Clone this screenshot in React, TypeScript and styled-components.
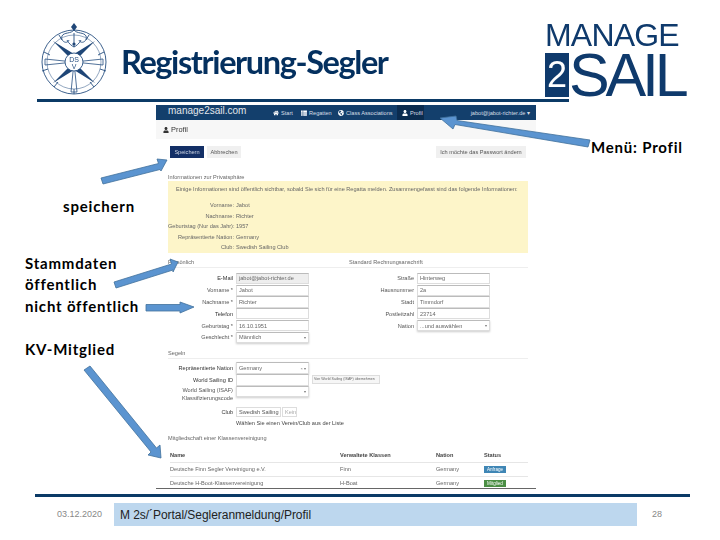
import styled, { createGlobalStyle } from "styled-components"
import { FaHome, FaThList, FaGlobeAmericas, FaUser } from "react-icons/fa"

const GlobalStyle = createGlobalStyle`
  html, body {
    margin: 0;
    padding: 0;
    background: #fff;
  }
  * { box-sizing: border-box; }
`

const Slide = styled.div`
  position: relative;
  width: 720px;
  height: 540px;
  overflow: hidden;
  background: #fff;
  font-family: "Liberation Sans", Arial, sans-serif;
`

const Header = styled.header`
  display: flex;
  align-items: flex-start;
  height: 102px;
  padding-left: 37px;
`

const TitleBar = styled.div`
  display: flex;
  align-items: flex-start;
  width: 532px;
  height: 102px;
  border-bottom: 3px solid #0b3a66;
`

const Title = styled.h1`
  margin: 43px 0 0 10px;
  font-family: Lato, "Open Sans", sans-serif;
  font-size: 32.5px;
  line-height: 38px;
  font-weight: 700;
  letter-spacing: -1.4px;
  color: #04305f;
  white-space: nowrap;
  filter: blur(0.3px);
`

const Brand = styled.div`
  margin: 18px 0 0 -24px;
  color: #0f3a6c;
  display: flex;
  flex-direction: column;
  font-family: "Liberation Sans", Arial, sans-serif;
  filter: blur(0.3px);
`

const BrandTop = styled.div`
  font-size: 32px;
  line-height: 35px;
  letter-spacing: -0.8px;
`

const BrandBottom = styled.div`
  display: flex;
  align-items: center;
  height: 44px;
`

const BrandBox = styled.span`
  width: 24px;
  height: 44px;
  display: flex;
  align-items: center;
  justify-content: center;
  background: #0f3a6c;
  color: #fff;
  font-size: 36px;
`

const BrandSail = styled.span`
  font-size: 61px;
  line-height: 44px;
  letter-spacing: -4.2px;
`

const Main = styled.main`
  display: flex;
  height: 392px;
`

const LeftNotes = styled.aside`
  width: 156px;
  padding: 94px 0 0 25px;
`

const Note = styled.p<{ $top?: number; $indent?: number }>`
  margin: ${p => p.$top ?? 0}px 0 0 ${p => p.$indent ?? 0}px;
  font-family: Lato, "Open Sans", sans-serif;
  font-size: 15px;
  line-height: 21.5px;
  font-weight: 700;
  letter-spacing: 0.8px;
  color: #000;
  white-space: nowrap;
`

const RightNotes = styled.aside`
  flex: 1;
  padding: 35px 0 0 55px;
`

const Panel = styled.section`
  width: 380px;
  height: 384px;
  margin-top: 3px;
  display: flex;
  flex-direction: column;
  color: #666;
  font-size: 5.6px;
  filter: blur(0.5px);
  border-bottom: 1px solid #666;
  > * { flex: none; }
`

const Nav = styled.nav`
  height: 15px;
  background: #133f6c;
  color: #d8dfe6;
  display: flex;
  align-items: center;
  padding-left: 12px;
`

const NavBrand = styled.span`
  width: 100px;
  font-size: 10px;
  line-height: 11px;
  margin-top: -4px;
  color: #e2e6ea;
`

const NavLink = styled.span<{ $active?: boolean; $width: number }>`
  display: flex;
  align-items: center;
  gap: 2px;
  width: ${p => p.$width}px;
  height: 15px;
  padding-left: 5px;
  background: ${p => (p.$active ? "#0b2c4f" : "transparent")};
  white-space: nowrap;
  svg { flex: none; color: #fff; }
`

const NavUser = styled.span`
  margin-left: auto;
  padding-right: 6px;
`

const SubHeader = styled.div`
  height: 19px;
  background: #f7f7f7;
  color: #333;
  font-size: 7.4px;
  display: flex;
  align-items: center;
  gap: 2px;
  padding-left: 7px;
`

const Actions = styled.div`
  display: flex;
  gap: 3px;
  margin: 7px 10px 0 14px;
  height: 12px;
`

const ActionButton = styled.span<{ $primary?: boolean; $wide?: boolean }>`
  width: ${p => (p.$wide ? 90 : 34)}px;
  margin-left: ${p => (p.$wide ? "auto" : 0)};
  display: flex;
  align-items: center;
  justify-content: center;
  background: ${p => (p.$primary ? "#132f66" : "#f0f0f0")};
  color: ${p => (p.$primary ? "#cfd6e4" : "#555")};
  white-space: nowrap;
`

const SmallHead = styled.div<{ $top: number }>`
  margin: ${p => p.$top}px 0 0 12px;
  height: 7px;
  line-height: 7px;
  white-space: nowrap;
`

const InfoBox = styled.div`
  width: 360px;
  height: 72px;
  margin: 0 0 0 12px;
  padding-top: 5px;
  background: #fdf5c9;
`

const InfoIntro = styled.div`
  padding-left: 8px;
  height: 14.5px;
  white-space: nowrap;
`

const InfoRow = styled.div`
  display: grid;
  grid-template-columns: 66px 1fr;
  gap: 2px;
  height: 10.5px;
  line-height: 10.5px;
  white-space: nowrap;
  span:first-child { text-align: right; }
`

const Columns = styled.div<{ $top: number }>`
  display: flex;
  margin: ${p => p.$top}px 0 0 12px;
  width: 360px;
`

const Column = styled.div<{ $width: number }>`
  width: ${p => p.$width}px;
`

const SectionHead = styled.div<{ $gap: number }>`
  height: 9px;
  line-height: 7px;
  border-bottom: 1px solid #eee;
  margin-bottom: ${p => p.$gap}px;
  white-space: nowrap;
`

const FormRow = styled.div<{ $tall?: boolean }>`
  display: grid;
  grid-template-columns: 65px 73px auto;
  gap: 3px;
  align-items: ${p => (p.$tall ? "start" : "center")};
  height: ${p => (p.$tall ? 20 : 11.8)}px;
  white-space: nowrap;
`

const FormLabel = styled.span<{ $strong?: boolean }>`
  text-align: right;
  color: ${p => (p.$strong ? "#333" : "#555")};
  line-height: 8px;
  white-space: normal;
`

const Field = styled.span<{ $muted?: boolean; $select?: boolean }>`
  height: 11.4px;
  display: flex;
  align-items: center;
  justify-content: space-between;
  padding: 0 2px;
  border: 1px solid #ddd;
  border-top-color: #bbb;
  background: ${p => (p.$muted ? "#eeeeee" : "#fff")};
  box-shadow: ${p => (p.$select ? "0 1px 2px #ccc" : "none")};
  white-space: nowrap;
  overflow: hidden;
`

const Caret = styled.i`
  font-style: normal;
  color: #777;
  font-size: 4px;
`

const SmallButton = styled.span`
  width: 68px;
  height: 9px;
  border: 1px solid #ddd;
  background: #f6f6f6;
  font-size: 3.6px;
  line-height: 7px;
  white-space: nowrap;
  padding-left: 1px;
`

const ClubFields = styled.div`
  display: flex;
  gap: 1px;
`

const ClubField = styled.span<{ $width: number; $muted?: boolean }>`
  width: ${p => p.$width}px;
  height: 10px;
  display: flex;
  align-items: center;
  padding: 0 2px;
  border: 1px solid #ddd;
  color: ${p => (p.$muted ? "#aaa" : "#555")};
  white-space: nowrap;
`

const ClubHint = styled.div`
  margin: 1px 0 0 68px;
  height: 8px;
  line-height: 8px;
  color: #444;
  white-space: nowrap;
`

const Table = styled.div`
  margin: 7px 0 0 14px;
  width: 358px;
`

const TableRow = styled.div<{ $head?: boolean }>`
  display: grid;
  grid-template-columns: 170px 96px 48px 1fr;
  align-items: center;
  height: 14px;
  border-bottom: 1px solid #e6e6e6;
  color: ${p => (p.$head ? "#444" : "#666")};
  font-weight: ${p => (p.$head ? 700 : 400)};
  white-space: nowrap;
  &:last-child {
    height: 13px;
    border-bottom: none;
  }
`

const Badge = styled.span<{ $color: string }>`
  display: inline-block;
  width: 22px;
  height: 7px;
  line-height: 7px;
  text-align: center;
  font-size: 4.6px;
  background: ${p => p.$color};
  color: #fff;
`

const Footer = styled.footer`
  margin: 0 30px 0 35px;
  height: 31px;
  border-top: 3px solid #0b3a66;
  padding-top: 6px;
  display: flex;
  align-items: stretch;
  font-size: 9px;
  color: #888;
`

const FooterDate = styled.span`
  width: 79px;
  padding-left: 22px;
  display: flex;
  align-items: center;
  white-space: nowrap;
`

const FooterBar = styled.div`
  width: 523px;
  height: 23px;
  background: #bdd7ee;
  color: #222;
  font-size: 12px;
  display: flex;
  align-items: center;
  padding-left: 6px;
  letter-spacing: -0.05px;
  white-space: nowrap;
`

const FooterPage = styled.span`
  margin-left: 15px;
  display: flex;
  align-items: center;
`

const ArrowLayer = styled.svg`
  position: absolute;
  left: 0;
  top: 0;
  pointer-events: none;
`

const LogoMark = styled.svg`
  flex: none;
  margin-top: 21px;
  filter: blur(0.25px);
`

const DsvLogo = () => (
  <LogoMark width="74" height="74" viewBox="0 0 74 74">
    <g fill="none" stroke="#274f80" strokeWidth="0.9">
      <circle cx="37" cy="41" r="32" />
      <circle cx="37" cy="41" r="27" strokeWidth="0.5" />
      <path d="M37 9c-3 4-10 2-12 6-2 5 5 9 7 4M37 9c3 4 10 2 12 6 2 5-5 9-7 4M37 12v14M30 19c2 4 5 6 7 7 2-1 5-3 7-7" />
      <path d="M7 31l6 3M67 31l-6 3M5 50l6-2M69 50l-6-2M17 66l4-5M57 66l-4-5M37 73v-5M22 14l3 5M52 14l-3 5" />
    </g>
    <path d="M37 2l3 4-3 4-3-4z" fill="#1f4677" />
    <circle cx="37" cy="23" r="1.6" fill="#1f4677" />
    <path d="M16 20l21 13 4 8-8-4zM58 20L37 33l-4 8 8-4zM16 62l21-13 4-8-8 4zM58 62L37 49l-4-8 8 4z" fill="#1f4677" />
    <path d="M37 41L8 38v6zM37 41l29-3v6zM37 41l-3 30h6z" fill="none" stroke="#274f80" strokeWidth="0.8" />
    <circle cx="37" cy="41" r="9" fill="#fff" stroke="#274f80" strokeWidth="0.9" />
    <text x="37" y="41" textAnchor="middle" fontSize="7" fill="#274f80" fontFamily="Liberation Sans">DS</text>
    <text x="37" y="48" textAnchor="middle" fontSize="7" fill="#274f80" fontFamily="Liberation Sans">V</text>
  </LogoMark>
)

const arrows = [
  "440,118 456,116 457,120.5 590,140 588,147 455,124.5 453,129",
  "167,160 157,159 158.5,163.5 101,178 103,184 160,169.5 161,171",
  "178,262 170,259 171.5,264 114,282 116,288 173,270 173,272",
  "194,307 180,302 180,304.5 146,304.5 146,311 180,311 180,313",
  "161,458 160,445 156.5,448 90,366 84,370 151,452 148,455",
]

const fieldsLeft = [
  { label: "E-Mail", value: "jabot@jabot-richter.de", strong: true, muted: true },
  { label: "Vorname *", value: "Jabot" },
  { label: "Nachname *", value: "Richter" },
  { label: "Telefon", value: "", strong: true },
  { label: "Geburtstag *", value: "16.10.1951" },
]

const fieldsRight = [
  { label: "Straße", value: "Hinterweg" },
  { label: "Hausnummer", value: "2a" },
  { label: "Stadt", value: "Timmdorf" },
  { label: "Postleitzahl", value: "23714" },
]

const infos = [
  ["Vorname:", "Jabot"],
  ["Nachname:", "Richter"],
  ["Geburtstag (Nur das Jahr):", "1957"],
  ["Repräsentierte Nation:", "Germany"],
  ["Club:", "Swedish Sailing Club"],
]

export default function App() {
  return (
    <Slide>
      <GlobalStyle />
      <Header>
        <TitleBar>
          <DsvLogo />
          <Title>Registrierung-Segler</Title>
        </TitleBar>
        <Brand>
          <BrandTop>MANAGE</BrandTop>
          <BrandBottom>
            <BrandBox>2</BrandBox>
            <BrandSail>SAIL</BrandSail>
          </BrandBottom>
        </Brand>
      </Header>
      <Main>
        <LeftNotes>
          <Note $indent={38}>speichern</Note>
          <Note $top={35}>Stammdaten</Note>
          <Note>öffentlich</Note>
          <Note>nicht öffentlich</Note>
          <Note $top={22}>KV-Mitglied</Note>
        </LeftNotes>
        <Panel>
          <Nav>
            <NavBrand>manage2sail.com</NavBrand>
            <NavLink $width={28}><FaHome size={6} /> Start</NavLink>
            <NavLink $width={37}><FaThList size={6} /> Regatten</NavLink>
            <NavLink $width={64}><FaGlobeAmericas size={6} /> Class Associations</NavLink>
            <NavLink $width={27} $active><FaUser size={6} /> Profil</NavLink>
            <NavUser>jabot@jabot-richter.de ▾</NavUser>
          </Nav>
          <SubHeader><FaUser size={6} /> Profil</SubHeader>
          <Actions>
            <ActionButton $primary>Speichern</ActionButton>
            <ActionButton>Abbrechen</ActionButton>
            <ActionButton $wide>Ich möchte das Passwort ändern</ActionButton>
          </Actions>
          <SmallHead $top={15.5}>Informationen zur Privatsphäre</SmallHead>
          <InfoBox>
            <InfoIntro>Einige Informationen sind öffentlich sichtbar, sobald Sie sich für eine Regatta melden. Zusammengefasst sind das folgende Informationen:</InfoIntro>
            {infos.map(([label, value]) => (
              <InfoRow key={label}>
                <span>{label}</span>
                <span>{value}</span>
              </InfoRow>
            ))}
          </InfoBox>
          <Columns $top={6}>
            <Column $width={181}>
              <SectionHead $gap={5}>Persönlich</SectionHead>
              {fieldsLeft.map(f => (
                <FormRow key={f.label}>
                  <FormLabel $strong={f.strong}>{f.label}</FormLabel>
                  <Field $muted={f.muted}>{f.value}</Field>
                </FormRow>
              ))}
              <FormRow>
                <FormLabel>Geschlecht *</FormLabel>
                <Field $select>Männlich <Caret>▾</Caret></Field>
              </FormRow>
            </Column>
            <Column $width={179}>
              <SectionHead $gap={5}>Standard Rechnungsanschrift</SectionHead>
              {fieldsRight.map(f => (
                <FormRow key={f.label}>
                  <FormLabel>{f.label}</FormLabel>
                  <Field>{f.value}</Field>
                </FormRow>
              ))}
              <FormRow>
                <FormLabel>Nation</FormLabel>
                <Field $select>...und auswählen <Caret>▾</Caret></Field>
              </FormRow>
            </Column>
          </Columns>
          <Columns $top={7}>
            <Column $width={360}>
              <SectionHead $gap={3}>Segeln</SectionHead>
              <FormRow>
                <FormLabel $strong>Repräsentierte Nation</FormLabel>
                <Field $select>Germany <Caret>× ▾</Caret></Field>
              </FormRow>
              <FormRow>
                <FormLabel $strong>World Sailing ID</FormLabel>
                <Field />
                <SmallButton>Von World Sailing (ISAF) übernehmen</SmallButton>
              </FormRow>
              <FormRow $tall>
                <FormLabel>World Sailing (ISAF) Klassifizierungscode</FormLabel>
                <Field $select>&nbsp;<Caret>▾</Caret></Field>
              </FormRow>
              <FormRow>
                <FormLabel $strong>Club</FormLabel>
                <ClubFields>
                  <ClubField $width={45}>Swedish Sailing</ClubField>
                  <ClubField $width={15} $muted>Kein</ClubField>
                </ClubFields>
              </FormRow>
              <ClubHint>Wählen Sie einen Verein/Club aus der Liste</ClubHint>
            </Column>
          </Columns>
          <SmallHead $top={8}>Mitgliedschaft einer Klassenvereinigung</SmallHead>
          <Table>
            <TableRow $head>
              <span>Name</span>
              <span>Verwaltete Klassen</span>
              <span>Nation</span>
              <span>Status</span>
            </TableRow>
            <TableRow>
              <span>Deutsche Finn Segler Vereinigung e.V.</span>
              <span>Finn</span>
              <span>Germany</span>
              <span><Badge $color="#3f86b5">Anfrage</Badge></span>
            </TableRow>
            <TableRow>
              <span>Deutsche H-Boot-Klassenvereinigung</span>
              <span>H-Boat</span>
              <span>Germany</span>
              <span><Badge $color="#4c8f45">Mitglied</Badge></span>
            </TableRow>
          </Table>
        </Panel>
        <RightNotes>
          <Note>Menü: Profil</Note>
        </RightNotes>
      </Main>
      <Footer>
        <FooterDate>03.12.2020</FooterDate>
        <FooterBar>M 2s/´Portal/Segleranmeldung/Profil</FooterBar>
        <FooterPage>28</FooterPage>
      </Footer>
      <ArrowLayer width="720" height="540" viewBox="0 0 720 540">
        {arrows.map(points => (
          <polygon key={points} points={points} fill="#5b94d0" stroke="#41719c" strokeWidth="0.8" />
        ))}
      </ArrowLayer>
    </Slide>
  )
}
